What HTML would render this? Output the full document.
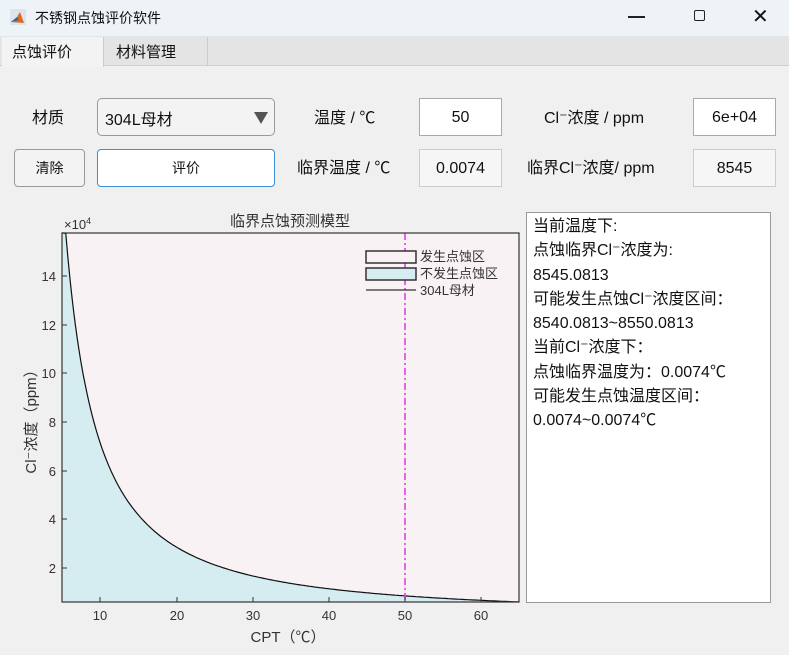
<!DOCTYPE html>
<html><head><meta charset="utf-8"><style>
*{margin:0;padding:0;box-sizing:border-box}
body{width:789px;height:655px;background:#f0f0f0;font-family:"Liberation Sans","Noto Sans CJK SC",sans-serif;position:relative;overflow:hidden;color:#111}
.a{position:absolute}
.title{left:0;top:0;width:789px;height:36px;background:#eef3f8;font-size:14px}
.tabs{left:0;top:36px;width:789px;height:30px;background:#e4e4e4;border-bottom:1px solid #d0d0d0}
.lbl{font-size:16px;white-space:nowrap}
.box{background:#fff;border:1px solid #aaa;font-size:16px;text-align:center;line-height:37px}
.btn{border:1px solid #999;border-radius:4px;background:#f3f3f3;font-size:14px;text-align:center}
</style></head><body>
<div class="a title">
 <svg class="a" style="left:10px;top:9px" width="16" height="16"><rect width="16" height="16" fill="#dde4ec"/><path d="M1 13 L7 8 L10 3 L14 14 Z" fill="#e06a1c"/><path d="M1 13 L7 8 L9 11Z" fill="#2a6cb0"/></svg>
 <span class="a" style="left:35px;top:8px">不锈钢点蚀评价软件</span>
 <span class="a" style="left:628px;top:16px;width:17px;height:1.5px;background:#222"></span>
 <span class="a" style="left:694px;top:10px;width:11px;height:11px;border:1.5px solid #222;border-radius:2px"></span>
 <span class="a" style="left:752px;top:4px;font-size:20px;font-weight:300">✕</span>
</div>
<div class="a tabs"></div>
<div class="a" style="left:2px;top:37px;width:102px;height:30px;background:#f3f3f3;border-right:1px solid #ccc;font-size:15px;padding:4px 0 0 10px">点蚀评价</div>
<div class="a" style="left:104px;top:37px;width:104px;height:29px;border-right:1px solid #ccc;font-size:15px;padding:4px 0 0 12px">材料管理</div>

<span class="a lbl" style="left:32px;top:104px">材质</span>
<div class="a" style="left:97px;top:98px;width:178px;height:38px;border:1px solid #999;border-radius:5px;background:#f3f3f3;font-size:16px;padding:7px 0 0 7px">304L母材<svg class="a" style="left:156px;top:13px" width="14" height="12"><path d="M0 0H14L7 12Z" fill="#555"/></svg></div>
<span class="a lbl" style="left:314px;top:104px">温度 / ℃</span>
<div class="a box" style="left:419px;top:98px;width:83px;height:38px">50</div>
<span class="a lbl" style="left:544px;top:104px">Cl⁻浓度 / ppm</span>
<div class="a box" style="left:693px;top:98px;width:83px;height:38px">6e+04</div>

<div class="a btn" style="left:14px;top:149px;width:71px;height:38px;line-height:36px">清除</div>
<div class="a btn" style="left:97px;top:149px;width:178px;height:38px;line-height:36px;background:#fff;border-color:#3c8fd8">评价</div>
<span class="a lbl" style="left:297px;top:154px">临界温度 / ℃</span>
<div class="a box" style="left:419px;top:149px;width:83px;height:38px;background:#f6f6f6;border-color:#ccc">0.0074</div>
<span class="a lbl" style="left:527px;top:154px">临界Cl⁻浓度/ ppm</span>
<div class="a box" style="left:693px;top:149px;width:83px;height:38px;background:#f6f6f6;border-color:#ccc">8545</div>

<div class="a" style="left:526px;top:212px;width:245px;height:391px;background:#fff;border:1px solid #999;font-size:16px;line-height:24.3px;padding:2px 0 0 6px">当前温度下:<br>点蚀临界Cl⁻浓度为:<br>8545.0813<br>可能发生点蚀Cl⁻浓度区间：<br>8540.0813~8550.0813<br>当前Cl⁻浓度下：<br>点蚀临界温度为：0.0074℃<br>可能发生点蚀温度区间：<br>0.0074~0.0074℃</div>

<svg class="a" style="left:0;top:0" width="789" height="655" font-family="Liberation Sans, Noto Sans CJK SC, sans-serif">
 <rect x="62" y="233" width="457" height="369" fill="#f8f2f4"/>
 <path id="fill" fill="#d5edf1" d=""/>
 <path id="cur" fill="none" stroke="#111" stroke-width="1.2" d=""/>
 <line x1="405" y1="233" x2="405" y2="602" stroke="#e040e8" stroke-width="1.6" stroke-dasharray="7,3,2,3"/>
 <rect x="62" y="233" width="457" height="369" fill="none" stroke="#333" stroke-width="1.2"/>
 <g stroke="#333" stroke-width="1">
  <line x1="100" y1="602" x2="100" y2="597"/><line x1="177" y1="602" x2="177" y2="597"/><line x1="253" y1="602" x2="253" y2="597"/><line x1="329" y1="602" x2="329" y2="597"/><line x1="405" y1="602" x2="405" y2="597"/><line x1="481" y1="602" x2="481" y2="597"/>
  <line x1="62" y1="276" x2="67" y2="276"/><line x1="62" y1="325" x2="67" y2="325"/><line x1="62" y1="373" x2="67" y2="373"/><line x1="62" y1="422" x2="67" y2="422"/><line x1="62" y1="471" x2="67" y2="471"/><line x1="62" y1="519" x2="67" y2="519"/><line x1="62" y1="568" x2="67" y2="568"/>
 </g>
 <g font-size="13" fill="#333" text-anchor="middle">
  <text x="100" y="620">10</text><text x="177" y="620">20</text><text x="253" y="620">30</text><text x="329" y="620">40</text><text x="405" y="620">50</text><text x="481" y="620">60</text>
 </g>
 <g font-size="13" fill="#333" text-anchor="end">
  <text x="56" y="281">14</text><text x="56" y="330">12</text><text x="56" y="378">10</text><text x="56" y="427">8</text><text x="56" y="476">6</text><text x="56" y="524">4</text><text x="56" y="573">2</text>
 </g>
 <text x="64" y="229" font-size="13" fill="#333">×10<tspan font-size="9" dy="-5">4</tspan></text>
 <text x="290" y="226" font-size="15" fill="#333" text-anchor="middle">临界点蚀预测模型</text>
 <text x="288" y="642" font-size="15" fill="#333" text-anchor="middle">CPT（℃）</text>
 <text transform="translate(36,418) rotate(-90)" font-size="15" fill="#333" text-anchor="middle">Cl⁻浓度（ppm）</text>
 <rect x="366" y="251" width="50" height="12" fill="#f8f2f4" stroke="#333" stroke-width="1.5"/>
 <rect x="366" y="268" width="50" height="12" fill="#d5edf1" stroke="#333" stroke-width="1.5"/>
 <line x1="366" y1="290" x2="416" y2="290" stroke="#333" stroke-width="1.3"/>
 <g font-size="13" fill="#333"><text x="420" y="261">发生点蚀区</text><text x="420" y="278">不发生点蚀区</text><text x="420" y="295">304L母材</text></g>
</svg>
<script>
var p="";
for(var T=5;T<=65.001;T+=0.25){var c=0.8545*Math.pow(50/T,1.32);var x=62+(T-5)*7.617;var y=568-(c-2)*24.33;if(y<233)y=233;if(y>602)y=602;p+=(p?"L":"M")+x.toFixed(1)+" "+y.toFixed(1);}
document.getElementById("cur").setAttribute("d",p);
document.getElementById("fill").setAttribute("d",p+"L519 602L62 602Z");
</script>
</body></html>
